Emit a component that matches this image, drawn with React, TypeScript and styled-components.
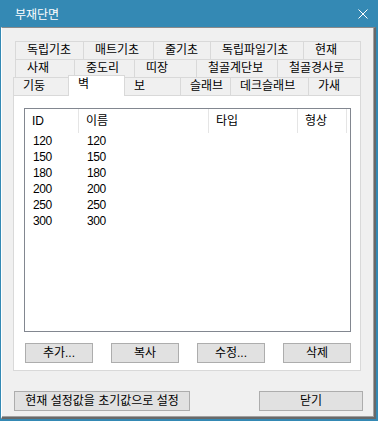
import React from 'react';
import styled, { createGlobalStyle } from 'styled-components';

const font = `"Liberation Sans", "Noto Sans CJK KR", sans-serif`;

const GlobalStyle = createGlobalStyle`
  body {
    margin: 0;
    font-family: ${font};
  }
`;

const Window = styled.div`
  width: 378px;
  height: 421px;
  box-sizing: border-box;
  background: #3489b4;
  display: flex;
  flex-direction: column;
`;

const TitleBar = styled.div`
  height: 27px;
  flex-shrink: 0;
  display: flex;
  align-items: center;
  justify-content: space-between;
  padding: 0 10px 0 15px;
  color: #fff;
  font: 12px/16px "Noto Sans CJK KR", sans-serif;
`;

const Client = styled.div`
  flex: 1;
  margin: 0 2px 2px 1px;
  box-sizing: border-box;
  background: #f0f0f0;
  border-top: 1px solid #8a8a8a;
  border-left: 1px solid #fff;
  border-right: 2px solid #696969;
  border-bottom: 2px solid #696969;
  box-shadow: inset -1px -1px 0 #a0a0a0;
  padding-top: 13px;
`;

const TabControl = styled.div`
  margin-left: 11px;
  width: 348px;
`;

const TabRow = styled.div<{ $inset?: boolean }>`
  display: flex;
  height: 18px;
  padding-left: ${p => (p.$inset ? 2 : 0)}px;
`;

const Tab = styled.div<{ $w: number; $pad: number; $active?: boolean }>`
  box-sizing: border-box;
  flex-shrink: 0;
  width: ${p => p.$w}px;
  height: ${p => (p.$active ? 21 : 18)}px;
  margin-top: ${p => (p.$active ? -2 : 0)}px;
  padding-left: ${p => p.$pad}px;
  border: 1px solid #d9d9d9;
  border-bottom: none;
  background: ${p => (p.$active ? '#fff' : '#f0f0f0')};
  position: ${p => (p.$active ? 'relative' : 'static')};
  z-index: ${p => (p.$active ? 1 : 'auto')};
  font-size: 12px;
  line-height: 17px;
  color: #000;
  white-space: nowrap;

  & + & {
    margin-left: -1px;
  }
`;

const Panel = styled.div`
  box-sizing: border-box;
  height: 276px;
  background: #fff;
  border: 1px solid #d9d9d9;
  padding: 12px 0 0 10px;
`;

const ListView = styled.div`
  box-sizing: border-box;
  width: 327px;
  height: 224px;
  border: 1px solid #828790;
  background: #fff;
`;

const HeaderRow = styled.div`
  display: flex;
  height: 24px;
`;

const HeaderCell = styled.div<{ $w: number }>`
  box-sizing: border-box;
  width: ${p => p.$w}px;
  border-right: 1px solid #e5e5e5;
  padding: 1px 0 0 7px;
  font-size: 12px;
  line-height: 23px;
  color: #000;
`;

const Row = styled.div`
  display: flex;
  height: 16px;
`;

const Cell = styled.div<{ $w: number }>`
  box-sizing: border-box;
  width: ${p => p.$w}px;
  padding-left: 8px;
  font-size: 12px;
  line-height: 16px;
  letter-spacing: -0.4px;
  color: #000;
`;

const ButtonRow = styled.div`
  display: flex;
  justify-content: space-between;
  width: 326px;
  margin: 11px 0 0 1px;
`;

const Button = styled.button<{ $w: number }>`
  box-sizing: border-box;
  width: ${p => p.$w}px;
  height: 20px;
  padding: 0;
  background: #e1e1e1;
  border: 1px solid #adadad;
  border-radius: 0;
  font-family: ${font};
  font-size: 12px;
  line-height: 18px;
  color: #000;
  white-space: nowrap;
`;

const BottomBar = styled.div`
  display: flex;
  justify-content: space-between;
  width: 349px;
  margin: 20px 0 0 12px;
`;

const tabRows = [
  [
    { label: '독립기초', w: 69 },
    { label: '매트기초', w: 71 },
    { label: '줄기초', w: 58 },
    { label: '독립파일기초', w: 94 },
    { label: '현재', w: 58 },
  ],
  [
    { label: '사재', w: 60 },
    { label: '중도리', w: 61 },
    { label: '띠장', w: 63 },
    { label: '철골계단보', w: 82 },
    { label: '철골경사로', w: 84 },
  ],
];

const frontTabs = [
  { label: '기둥', w: 56 },
  { label: '벽', w: 57, active: true },
  { label: '보', w: 57 },
  { label: '슬래브', w: 51 },
  { label: '데크슬래브', w: 79 },
  { label: '가새', w: 53 },
];

const columns = [
  { title: 'ID', w: 54 },
  { title: '이름', w: 130 },
  { title: '타입', w: 89 },
  { title: '형상', w: 49 },
];

const sections = ['120', '150', '180', '200', '250', '300'];

const CloseIcon = () => (
  <svg width="10" height="10" viewBox="0 0 10 10">
    <path d="M0.5 0.5 L9.5 9.5 M9.5 0.5 L0.5 9.5" stroke="#fff" strokeWidth="1" />
  </svg>
);

export default function App() {
  return (
    <Window>
      <GlobalStyle />
      <TitleBar>
        <span>부재단면</span>
        <CloseIcon />
      </TitleBar>
      <Client>
        <TabControl>
          {tabRows.map((row, i) => (
            <TabRow key={i} $inset>
              {row.map(t => (
                <Tab key={t.label} $w={t.w} $pad={11}>{t.label}</Tab>
              ))}
            </TabRow>
          ))}
          <TabRow>
            {frontTabs.map(t => (
              <Tab key={t.label} $w={t.w} $pad={9} $active={t.active}>{t.label}</Tab>
            ))}
          </TabRow>
          <Panel>
            <ListView>
              <HeaderRow>
                {columns.map(c => (
                  <HeaderCell key={c.title} $w={c.w}>{c.title}</HeaderCell>
                ))}
              </HeaderRow>
              {sections.map(s => (
                <Row key={s}>
                  <Cell $w={54}>{s}</Cell>
                  <Cell $w={130}>{s}</Cell>
                </Row>
              ))}
            </ListView>
            <ButtonRow>
              <Button $w={68}>추가...</Button>
              <Button $w={68}>복사</Button>
              <Button $w={68}>수정...</Button>
              <Button $w={68}>삭제</Button>
            </ButtonRow>
          </Panel>
        </TabControl>
        <BottomBar>
          <Button $w={176}>현재 설정값을 초기값으로 설정</Button>
          <Button $w={104}>닫기</Button>
        </BottomBar>
      </Client>
    </Window>
  );
}
